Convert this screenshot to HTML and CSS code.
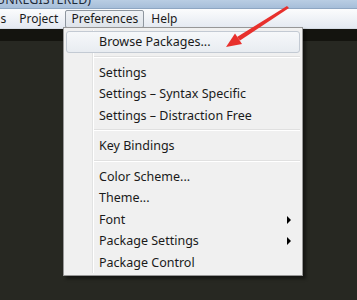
FILE: index.html
```html
<!DOCTYPE html>
<html>
  <head>
    <link rel="stylesheet" href="styles.css">
  </head>

  <body>
    <div class="titlebar"><span>UNREGISTERED)</span></div>

    <div class="menubar">
      <span class="menu-item cut">Tools</span>
      <span class="menu-item">Project</span>
      <span class="menu-item open">Preferences</span>
      <span class="menu-item">Help</span>
    </div>

    <div class="workspace">
      <div class="tabstrip"></div>
    </div>

    <div class="dropdown">
      <div class="gutter"></div>
      <div class="item active">Browse Packages...</div>
      <div class="separator"></div>
      <div class="item">Settings</div>
      <div class="item">Settings – Syntax Specific</div>
      <div class="item">Settings – Distraction Free</div>
      <div class="separator"></div>
      <div class="item">Key Bindings</div>
      <div class="separator"></div>
      <div class="item">Color Scheme...</div>
      <div class="item">Theme...</div>
      <div class="item submenu">Font</div>
      <div class="item submenu">Package Settings</div>
      <div class="item">Package Control</div>
    </div>

    <!-- annotation arrow -->
    <svg class="pointer" width="357" height="60" viewBox="0 0 357 60">
      <polygon fill="#e8302c" points="287,6 289,8 240,40.5 237,37" />
      <polygon fill="#e8302c" points="226,47 235,33.5 242,44" />
    </svg>
  </body>
</html>
```

FILE: styles.css
```css
body {
  margin: 0;
  width: 357px;
  height: 300px;
  overflow: hidden;
  font-family: "Noto Sans", "Liberation Sans", sans-serif;
  font-size: 12.5px;
  color: #1a1a1a;
  background-color: #272822;
}

.titlebar {
  height: 8px;
  overflow: hidden;
  background: linear-gradient(#b9cde3, #a6bed9);
  border-bottom: 1px solid #8ea6c2;
  color: #1e2a3a;
}

.titlebar span {
  display: block;
  margin-top: -8px;
  margin-left: -4px;
  font-size: 12.5px;
  line-height: 16px;
}

.menubar {
  display: flex;
  align-items: center;
  height: 19px;
  font-size: 12px;
  background: linear-gradient(#fbfcfd, #e4e9f1);
  border-bottom: 1px solid #d5dbe4;
}

.menu-item {
  padding: 0 5px;
  margin-right: 1px;
  line-height: 16px;
  border: 1px solid transparent;
}

.menu-item.cut {
  margin-left: -29px;
}

.menu-item.open {
  background: linear-gradient(#eef1f5, #dfe4ea);
  border-color: #8e969f;
  border-radius: 2px;
}

.workspace {
  height: 272px;
  background-color: #272822;
}

.tabstrip {
  height: 12px;
  background-color: #14140f;
}

.dropdown {
  position: absolute;
  left: 63px;
  top: 27px;
  width: 238px;
  padding: 3px 0 2px;
  background-color: #f0f0f0;
  border: 1px solid #979797;
  box-shadow: 3px 3px 3px rgba(0, 0, 0, 0.45);
}

.gutter {
  position: absolute;
  left: 28px;
  top: 2px;
  bottom: 2px;
  width: 1px;
  background-color: #e2e3e3;
  border-right: 1px solid #ffffff;
}

.item {
  position: relative;
  box-sizing: border-box;
  height: 21.5px;
  line-height: 19.5px;
  margin: 0 2px;
  padding-left: 32px;
  border: 1px solid transparent;
  border-radius: 3px;
  white-space: nowrap;
}

.item.active {
  background: linear-gradient(#f6f8fa, #e8ecf1);
  border-color: #c3cad3;
}

.item.submenu::after {
  content: "";
  position: absolute;
  right: 8px;
  top: 6px;
  border-left: 4px solid #000000;
  border-top: 4px solid transparent;
  border-bottom: 4px solid transparent;
}

.separator {
  height: 1px;
  margin: 3px 2px 4px 30px;
  background-color: #e0e0e0;
  border-bottom: 1px solid #ffffff;
}

.pointer {
  position: absolute;
  left: 0;
  top: 0;
}
```
